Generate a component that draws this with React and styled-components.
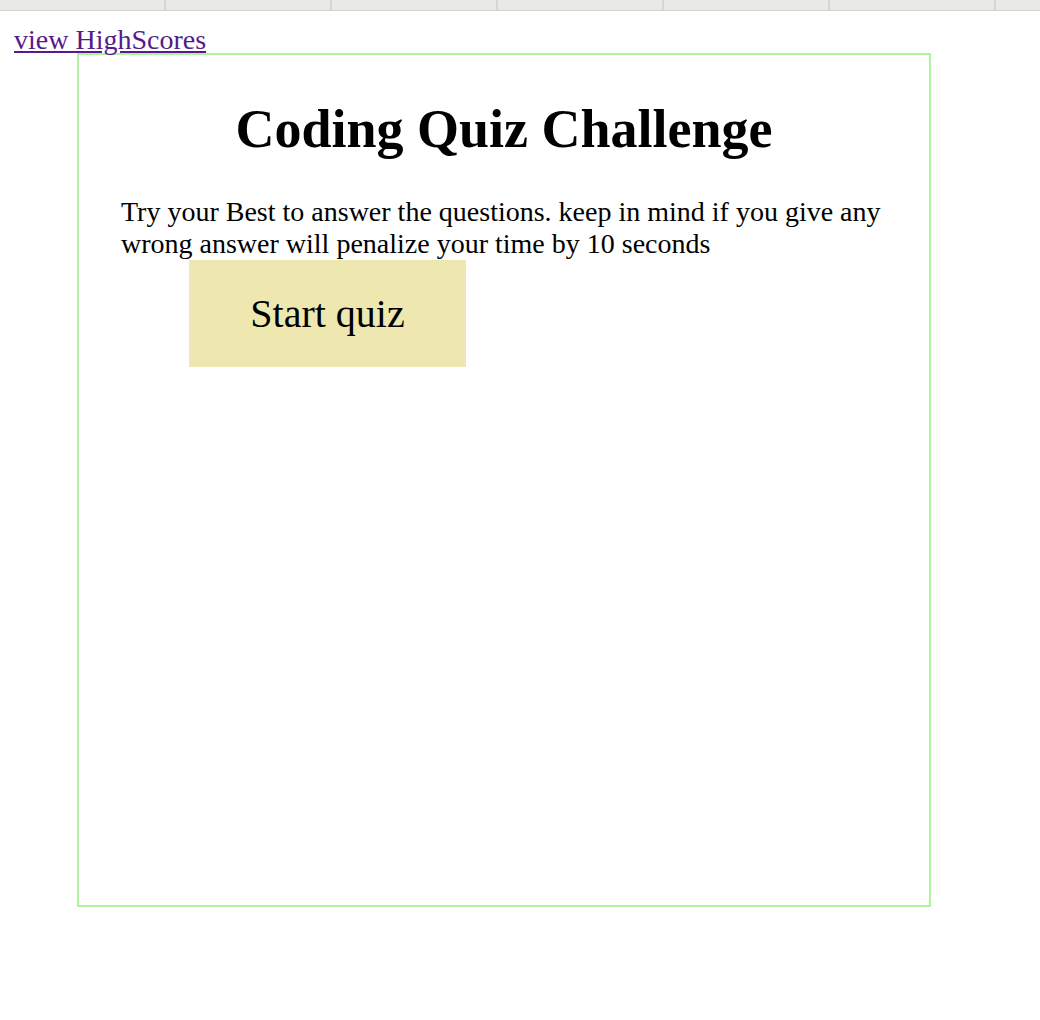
import React from 'react';
import styled, { createGlobalStyle } from 'styled-components';

const GlobalStyle = createGlobalStyle`
  body {
    margin: 0;
    background: #fff;
    font-family: "Liberation Serif", "Times New Roman", serif;
    color: #000;
  }
`;

const TabStrip = styled.div`
  display: flex;
  height: 10px;
  background: #e9e9e7;
  border-bottom: 1px solid #d2d2d0;
  overflow: hidden;
`;

const Tab = styled.div`
  flex: 0 0 164px;
  border-right: 2px solid #d6d6d4;
`;

const ScoresLink = styled.a`
  display: block;
  width: fit-content;
  margin: 16px 0 0 14px;
  font-size: 28px;
  line-height: 26px;
  color: #551a8b;
  text-decoration: underline;
`;

const QuizCard = styled.section`
  width: 850px;
  height: 850px;
  margin-left: 77px;
  border: 2px solid #aef3a0;
`;

const Title = styled.h1`
  margin: 43px 0 36px;
  font-size: 54px;
  font-weight: bold;
  text-align: center;
`;

const Intro = styled.p`
  margin: 0;
  padding: 0 42px;
  font-size: 28px;
  line-height: 32px;
`;

const StartButton = styled.button`
  display: block;
  width: 277px;
  height: 107px;
  margin-left: 110px;
  border: none;
  background: #eee8b0;
  font-family: inherit;
  font-size: 40px;
  color: #000;
  cursor: pointer;
`;

const App = () => {
  return (
    <>
      <GlobalStyle />
      <TabStrip>
        {[0, 1, 2, 3, 4, 5, 6].map(i => <Tab key={i} />)}
      </TabStrip>
      <ScoresLink href="#highscores">view HighScores</ScoresLink>
      <QuizCard>
        <Title>Coding Quiz Challenge</Title>
        <Intro>
          Try your Best to answer the questions. keep in mind if you give any wrong answer will penalize your time by 10 seconds
        </Intro>
        <StartButton>Start quiz</StartButton>
      </QuizCard>
    </>
  );
};

export default App;
